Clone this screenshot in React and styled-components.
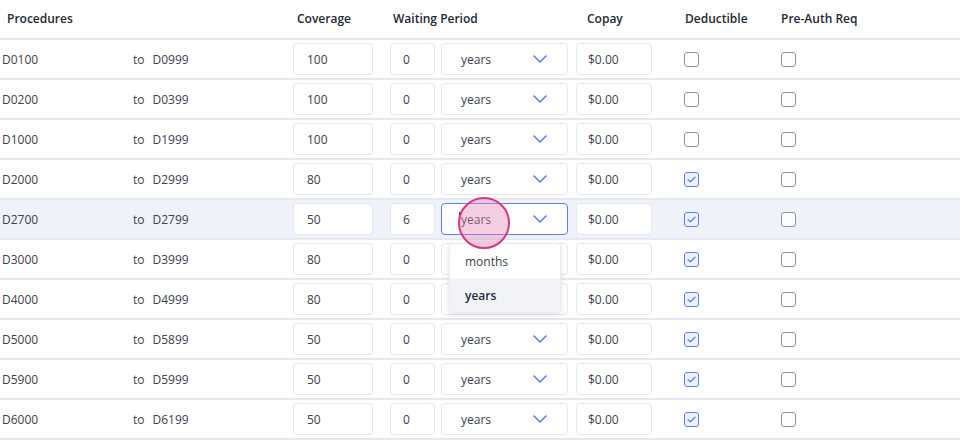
import React from 'react'
import styled, { createGlobalStyle } from 'styled-components'

const GlobalStyle = createGlobalStyle`
  html, body {
    margin: 0;
    padding: 0;
    background: #ffffff;
    font-family: 'Open Sans', 'Noto Sans', sans-serif;
  }
`

const COLS = '133px 160px 97px 186px 108px 97px 1fr'

const Table = styled.div`
  width: 960px;
  color: #3b414d;
  font-size: 12px;
`

const HeaderRow = styled.div`
  display: grid;
  grid-template-columns: ${COLS};
  height: 40px;
  box-sizing: border-box;
  border-bottom: 2px solid #e6e9ee;
  align-items: center;
`

const HeadCell = styled.div`
  font-weight: 600;
  color: #232834;
  padding-left: ${(p) => p.$pad || 0}px;
  padding-bottom: 2px;
  white-space: nowrap;
`

const Row = styled.div`
  display: grid;
  grid-template-columns: ${COLS};
  height: 40px;
  box-sizing: border-box;
  border-bottom: 2px solid #e6e9ee;
  align-items: center;
  background: ${(p) => (p.$active ? '#eff2f8' : '#ffffff')};
`

const Code = styled.div`
  padding-left: 2px;
`

const Range = styled.div`
  display: flex;
  gap: 8px;
`

const Cell = styled.div`
  display: flex;
  align-items: center;
  gap: 6px;
  position: relative;
`

const Field = styled.div`
  width: ${(p) => p.$w}px;
  height: 32px;
  box-sizing: border-box;
  border: 1px solid ${(p) => (p.$focus ? '#5a80f0' : '#e3e7ee')};
  border-radius: 4px;
  background: #ffffff;
  display: flex;
  align-items: center;
  padding-left: ${(p) => p.$pad}px;
  padding-right: 20px;
  justify-content: space-between;
`

const Checkbox = styled.div`
  width: 15px;
  height: 15px;
  box-sizing: border-box;
  border-radius: 3px;
  border: 1.5px solid ${(p) => (p.$checked ? '#5a80f0' : '#8b93a3')};
  background: ${(p) => (p.$checked ? '#eef2fe' : '#ffffff')};
  display: flex;
  align-items: center;
  justify-content: center;
`

const Menu = styled.div`
  position: absolute;
  top: 40px;
  left: 59px;
  width: 110px;
  background: #ffffff;
  border: 1px solid #e8ebf0;
  border-radius: 4px;
  box-shadow: 0 2px 6px rgba(30, 40, 60, 0.12);
  overflow: hidden;
  z-index: 2;
`

const Option = styled.div`
  height: 34px;
  display: flex;
  align-items: center;
  padding-left: 15px;
  background: ${(p) => (p.$selected ? '#f1f3f7' : '#ffffff')};
  font-weight: ${(p) => (p.$selected ? 600 : 400)};
  color: ${(p) => (p.$selected ? '#262b36' : '#3b414d')};
`

const Tap = styled.div`
  position: absolute;
  left: 68px;
  top: -6px;
  width: 52px;
  height: 52px;
  box-sizing: border-box;
  border-radius: 50%;
  border: 2px solid #d2397f;
  background: rgba(228, 130, 176, 0.38);
  z-index: 3;
`

const Caret = styled.span`
  position: absolute;
  left: 69px;
  top: 9px;
  width: 1px;
  height: 14px;
  background: #2a2f3a;
  z-index: 1;
`

const Chevron = () => (
  <svg width="14" height="8" viewBox="0 0 14 8" fill="none">
    <path d="M1 1l6 6 6-6" stroke="#4f7cf6" strokeWidth="1.5" strokeLinecap="round" strokeLinejoin="round" />
  </svg>
)

const Check = () => (
  <svg width="9" height="7" viewBox="0 0 9 7" fill="none">
    <path d="M1 3.6l2.3 2.2L8 1.2" stroke="#5a80f0" strokeWidth="1.3" strokeLinecap="round" strokeLinejoin="round" />
  </svg>
)

const rows = [
  { from: 'D0100', to: 'D0999', cov: '100', wait: '0', ded: false },
  { from: 'D0200', to: 'D0399', cov: '100', wait: '0', ded: false },
  { from: 'D1000', to: 'D1999', cov: '100', wait: '0', ded: false },
  { from: 'D2000', to: 'D2999', cov: '80', wait: '0', ded: true },
  { from: 'D2700', to: 'D2799', cov: '50', wait: '6', ded: true, active: true },
  { from: 'D3000', to: 'D3999', cov: '80', wait: '0', ded: true },
  { from: 'D4000', to: 'D4999', cov: '80', wait: '0', ded: true },
  { from: 'D5000', to: 'D5899', cov: '50', wait: '0', ded: true },
  { from: 'D5900', to: 'D5999', cov: '50', wait: '0', ded: true },
  { from: 'D6000', to: 'D6199', cov: '50', wait: '0', ded: true },
]

const App = () => {
  return (
    <Table>
      <GlobalStyle />
      <HeaderRow>
        <HeadCell $pad={7}>Procedures</HeadCell>
        <div />
        <HeadCell $pad={4}>Coverage</HeadCell>
        <HeadCell $pad={3}>Waiting Period</HeadCell>
        <HeadCell $pad={11}>Copay</HeadCell>
        <HeadCell $pad={1}>Deductible</HeadCell>
        <HeadCell>Pre-Auth Req</HeadCell>
      </HeaderRow>
      {rows.map((r) => (
        <Row key={r.from} $active={r.active}>
          <Code>{r.from}</Code>
          <Range>
            <span>to</span>
            <span>{r.to}</span>
          </Range>
          <Cell>
            <Field $w={80} $pad={13}>{r.cov}</Field>
          </Cell>
          <Cell>
            <Field $w={45} $pad={12}>{r.wait}</Field>
            <Field $w={127} $pad={19} $focus={r.active}>
              <span>years</span>
              <Chevron />
            </Field>
            {r.active && (
              <>
                <Caret />
                <Tap />
                <Menu>
                  <Option>months</Option>
                  <Option $selected>years</Option>
                </Menu>
              </>
            )}
          </Cell>
          <Cell>
            <Field $w={76} $pad={11}>$0.00</Field>
          </Cell>
          <Cell>
            <Checkbox $checked={r.ded}>{r.ded && <Check />}</Checkbox>
          </Cell>
          <Cell>
            <Checkbox />
          </Cell>
        </Row>
      ))}
    </Table>
  )
}

export default App
